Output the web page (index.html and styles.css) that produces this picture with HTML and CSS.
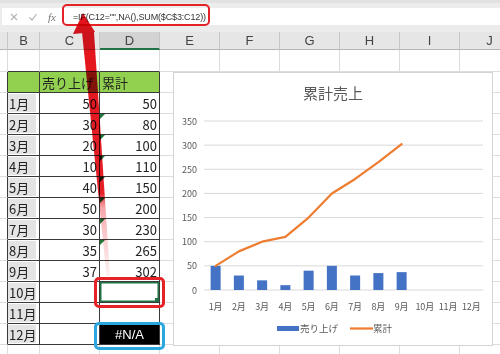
FILE: index.html
```html
<!DOCTYPE html>
<html lang="ja">
<head>
  <meta charset="UTF-8">
  <meta name="viewport" content="width=device-width, initial-scale=1.0">
  <title>累計売上</title>
  <link rel="stylesheet" href="styles.css">
</head>
<body>
  <div class="sheet">
    <div class="formula-area">
      <div class="formula-box">
        <svg class="fb-icon" width="10" height="10" viewBox="0 0 10 10"><path d="M2 2 L8 8 M8 2 L2 8" stroke="#b5b5b5" stroke-width="1.2" fill="none"/></svg>
        <svg class="fb-icon" width="10" height="10" viewBox="0 0 10 10"><path d="M1.5 5.5 L4 8 L8.5 2" stroke="#b5b5b5" stroke-width="1.2" fill="none"/></svg>
        <span class="fx">fx</span>
        <span class="formula">=IF(C12="",NA(),SUM($C$3:C12))</span>
      </div>
    </div>

    <div class="grid">
      <!-- cells generated below -->
    </div>

    <div class="chart">
      <svg id="chart-svg" width="318" height="272" viewBox="0 0 318 272"></svg>
    </div>

    <!-- annotations -->
    <div class="mark mark-formula"></div>
    <div class="mark mark-red"></div>
    <div class="mark mark-blue"></div>

    <svg class="arrow" width="500" height="354" viewBox="0 0 500 354">
      <defs>
        <linearGradient id="shaft" gradientUnits="userSpaceOnUse" x1="0" y1="33" x2="0" y2="276">
          <stop offset="0" stop-color="#e3141c" stop-opacity="1"/>
          <stop offset="0.66" stop-color="#e3141c" stop-opacity="0.95"/>
          <stop offset="0.72" stop-color="#ee6a70" stop-opacity="0.6"/>
          <stop offset="1" stop-color="#f5b3b6" stop-opacity="0.2"/>
        </linearGradient>
      </defs>
      <polygon points="82,32 94,32 110,276 106.5,276" fill="url(#shaft)"/>
      <polygon points="83,13 73,34 95,32" fill="#e3141c"/>
    </svg>
  </div>

  <script>
    const months = ['1月','2月','3月','4月','5月','6月','7月','8月','9月','10月','11月','12月'];
    const sales = [50, 30, 20, 10, 40, 50, 30, 35, 37];
    const totals = [50, 80, 100, 110, 150, 200, 230, 265, 302];
    const cols = ['', 'B', 'C', 'D', 'E', 'F', 'G', 'H', 'I', 'J'];

    function buildGrid() {
      const grid = document.querySelector('.grid');
      cols.forEach((c) => {
        const d = document.createElement('div');
        d.className = 'colhead' + (c === 'D' ? ' selected' : '');
        d.textContent = c;
        grid.appendChild(d);
      });

      for (let r = 1; r <= 15; r++) {
        cols.forEach((c, j) => {
          const d = document.createElement('div');
          d.classList.add('cell');
          const inTable = r >= 2 && r <= 14 && j >= 1 && j <= 3;
          if (inTable) d.classList.add('tb');
          if (j === 0 && r >= 2 && r <= 14) d.classList.add('tb-left');
          if (r === 1 && j >= 1 && j <= 3) d.classList.add('tb-top');

          if (r === 2 && inTable) {
            d.classList.add('head');
            if (c === 'C') d.textContent = '売り上げ';
            if (c === 'D') d.textContent = '累計';
          }
          if (r >= 3 && r <= 14) {
            const m = r - 3;
            if (c === 'B') {
              d.classList.add('month');
              d.textContent = months[m];
            }
            if (c === 'C' && m < sales.length) {
              d.classList.add('num');
              d.textContent = sales[m];
            }
            if (c === 'D') {
              if (m < totals.length) {
                d.classList.add('num');
                d.textContent = totals[m];
                if (m >= 1 && m <= 7) d.classList.add('warn');
              }
              if (m === 9) d.classList.add('active');
              if (m === 11) {
                d.classList.add('na');
                d.textContent = '#N/A';
              }
            }
          }
          grid.appendChild(d);
        });
      }
    }

    function el(name, attrs, text) {
      const e = document.createElementNS('http://www.w3.org/2000/svg', name);
      for (const k in attrs) e.setAttribute(k, attrs[k]);
      if (text !== undefined) e.textContent = text;
      return e;
    }

    function buildChart() {
      const svg = document.getElementById('chart-svg');
      const x0 = 30, x1 = 309, base = 217;
      const cw = (x1 - x0) / 12;
      const y = (v) => base - v * 169 / 350;
      const cx = (i) => x0 + cw * (i + 0.5);

      svg.appendChild(el('text', { x: 159, y: 26, class: 'title' }, '累計売上'));

      for (let v = 0; v <= 350; v += 50) {
        svg.appendChild(el('line', { x1: x0, x2: x1, y1: y(v), y2: y(v), class: 'gridline' }));
        svg.appendChild(el('text', { x: 23, y: y(v) + 3.5, class: 'ylabel' }, v));
      }

      sales.forEach((v, i) => {
        svg.appendChild(el('rect', { x: cx(i) - 5, y: y(v), width: 10, height: base - y(v), class: 'bar' }));
      });

      const pts = totals.map((v, i) => `${cx(i)},${y(v)}`).join(' ');
      svg.appendChild(el('polyline', { points: pts, class: 'line' }));

      months.forEach((m, i) => {
        svg.appendChild(el('text', { x: cx(i), y: 237, class: 'xlabel' }, m));
      });

      // legend
      svg.appendChild(el('rect', { x: 103, y: 253, width: 22, height: 5, class: 'bar' }));
      svg.appendChild(el('text', { x: 126, y: 259, class: 'legend' }, '売り上げ'));
      svg.appendChild(el('line', { x1: 176, x2: 199, y1: 255.5, y2: 255.5, class: 'legend-line' }));
      svg.appendChild(el('text', { x: 199, y: 259, class: 'legend' }, '累計'));
    }

    buildGrid();
    buildChart();
  </script>
</body>
</html>
```

FILE: styles.css
```css
*, *::before, *::after {
  margin: 0;
  padding: 0;
  box-sizing: border-box;
}

body {
  font-family: "Noto Sans CJK JP", "Noto Sans", sans-serif;
  background: #fff;
  width: 500px;
  height: 354px;
  overflow: hidden;
}

.sheet {
  position: relative;
  width: 500px;
  height: 354px;
  overflow: hidden;
}

/* formula bar */
.formula-area {
  height: 32px;
  background: #ececec;
  border-top: 3px solid #e2e2e2;
  padding: 5px 0 0 2px;
}

.formula-box {
  height: 17px;
  background: #fff;
  display: flex;
  align-items: center;
  padding-left: 7px;
  gap: 9px;
}

.fx {
  font-family: "Liberation Serif", serif;
  font-style: italic;
  font-size: 11px;
  color: #777;
  margin-left: 1px;
}

.formula {
  font-family: "Liberation Sans", Arial, sans-serif;
  font-size: 9px;
  letter-spacing: -0.15px;
  color: #333;
  margin-left: 8px;
}

/* sheet grid */
.grid {
  display: grid;
  grid-template-columns: 8px 32px repeat(8, 60px);
  grid-template-rows: 18px 22px repeat(14, 21px);
  width: 512px;
}

.colhead {
  background: #e6e6e6;
  border-right: 1px solid #c6c6c6;
  border-bottom: 1px solid #b4b4b4;
  font-family: "Liberation Sans", Arial, sans-serif;
  font-size: 13px;
  color: #444;
  display: flex;
  align-items: center;
  justify-content: center;
}

.colhead.selected {
  background: #d3d3d3;
  border-bottom: 2px solid #217346;
}

.cell {
  border-right: 1px solid #dcdcdc;
  border-bottom: 1px solid #dcdcdc;
  font-size: 13px;
  color: #222;
  display: flex;
  align-items: center;
  padding: 0 2px;
  white-space: nowrap;
  overflow: hidden;
  position: relative;
}

.cell.tb {
  border-right-color: #3a3a3a;
  border-bottom-color: #3a3a3a;
}

.cell.tb-left {
  border-right-color: #3a3a3a;
}

.cell.tb-top {
  border-bottom-color: #3a3a3a;
}

.cell.head {
  background: #92d050;
  overflow: visible;
}

.cell.month {
  background: #e4e4e4;
  background-clip: content-box;
  padding: 1px 3px 1px 0;
  text-indent: 1px;
}

.cell.num {
  justify-content: flex-end;
}

.cell.warn::before {
  content: "";
  position: absolute;
  left: 0;
  top: 0;
  border-top: 5px solid #1f7a35;
  border-right: 5px solid transparent;
}

.cell.active {
  box-shadow: inset 0 0 0 1.5px #217346;
}

.cell.active::after {
  content: "";
  position: absolute;
  right: 0;
  bottom: 0;
  width: 4px;
  height: 4px;
  background: #217346;
}

.cell.na {
  background: #000;
  color: #fff;
  justify-content: center;
  font-family: "Liberation Sans", Arial, sans-serif;
  font-size: 13px;
}

/* chart object */
.chart {
  position: absolute;
  left: 173px;
  top: 72px;
  width: 320px;
  height: 274px;
  background: #fff;
  border: 1px solid #d4d4d4;
}

.chart svg {
  display: block;
  font-family: "Noto Sans CJK JP", sans-serif;
}

.chart .title {
  font-size: 15px;
  fill: #595959;
  text-anchor: middle;
}

.chart .gridline {
  stroke: #d9d9d9;
  stroke-width: 1;
}

.chart .ylabel {
  font-size: 9px;
  fill: #595959;
  text-anchor: end;
}

.chart .xlabel {
  font-size: 9px;
  fill: #595959;
  text-anchor: middle;
}

.chart .legend {
  font-size: 9.5px;
  fill: #595959;
}

.chart .bar {
  fill: #4472c4;
}

.chart .line {
  fill: none;
  stroke: #ed7d31;
  stroke-width: 2.25;
  stroke-linejoin: round;
  stroke-linecap: round;
}

.chart .legend-line {
  stroke: #ed7d31;
  stroke-width: 2.25;
}

/* annotations drawn over the sheet */
.mark {
  position: absolute;
  border-radius: 5px;
}

.mark-formula {
  left: 62px;
  top: 4px;
  width: 148px;
  height: 22px;
  border: 2.5px solid #e42227;
}

.mark-red {
  left: 94px;
  top: 277px;
  width: 71px;
  height: 31px;
  border: 3px solid #e42227;
}

.mark-blue {
  left: 94px;
  top: 322px;
  width: 71px;
  height: 28px;
  border: 3px solid #2aa7df;
}

.arrow {
  position: absolute;
  left: 0;
  top: 0;
  pointer-events: none;
  mix-blend-mode: multiply;
}
```
